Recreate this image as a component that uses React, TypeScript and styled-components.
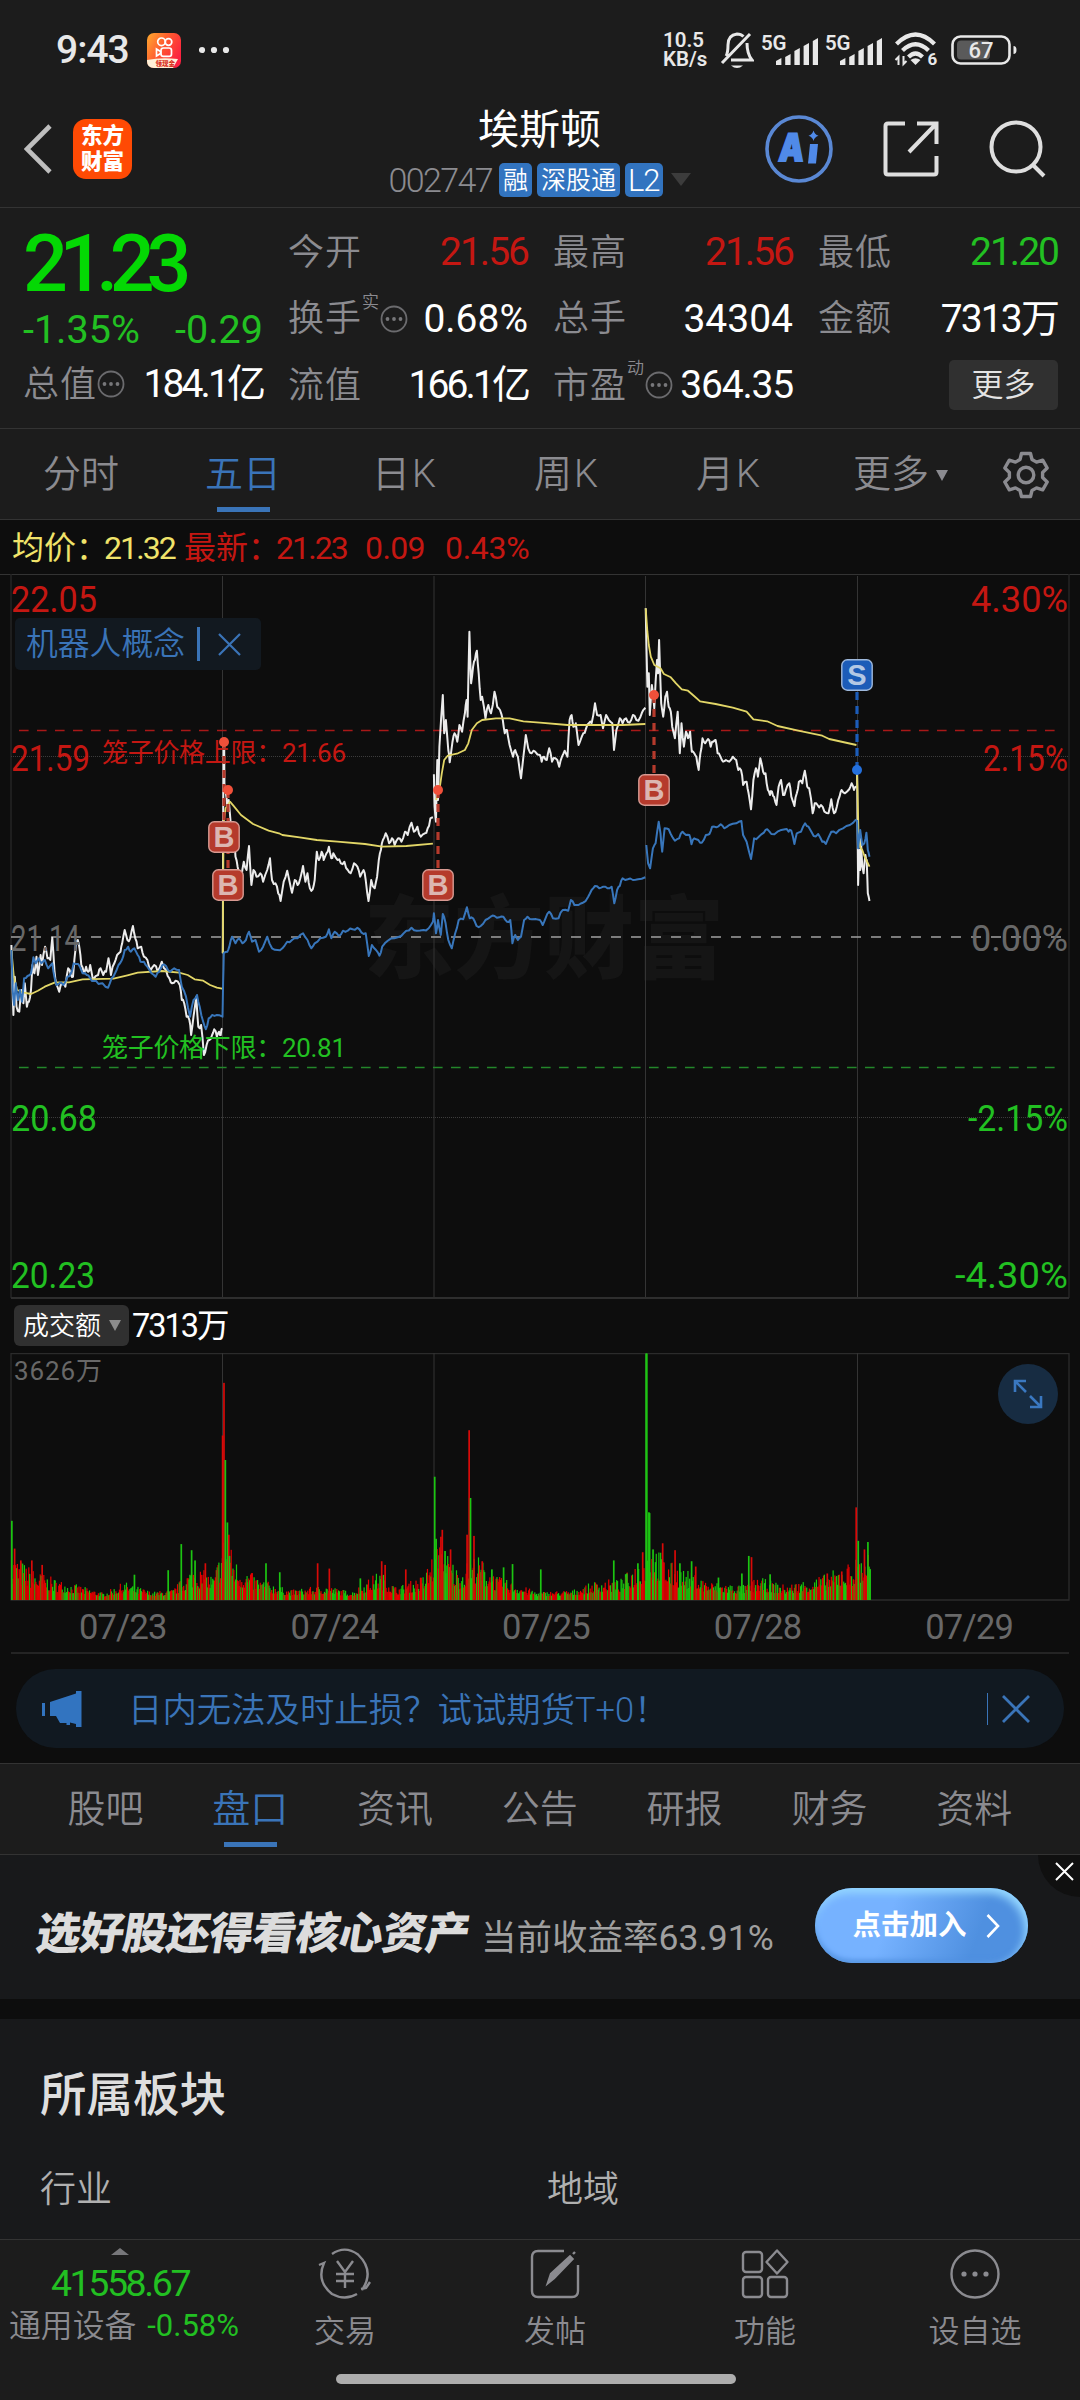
import React from "react";
import styled, { createGlobalStyle } from "styled-components";

const FONT = `Roboto, "Noto Sans CJK SC", sans-serif`;
const RED = "#c41712";
const GREEN = "#22c022";
const BLUE = "#3a74b8";
const GREY = "#8b8b90";

const GlobalStyle = createGlobalStyle`
  * { box-sizing: border-box; }
  body { margin: 0; background: #0d0d0d; font-family: ${FONT}; font-weight: 350; }
`;

const Screen = styled.main`
  width: 1080px;
  height: 2400px;
  overflow: hidden;
  display: flex;
  flex-direction: column;
  background: #0d0d0d;
  color: #fff;
  line-height: 1.2;
  white-space: nowrap;
`;

/* ---------- status bar ---------- */
const StatusBar = styled.header`
  height: 96px;
  padding: 4px 62px 0 56px;
  display: flex;
  align-items: center;
  justify-content: space-between;
  background: #1c1c1c;
  color: #e8e8e8;
`;
const StatusGroup = styled.div<{ $gap: number }>`
  display: flex;
  align-items: center;
  gap: ${(p) => p.$gap}px;
`;
const Clock = styled.span`
  font-size: 39px;
  font-weight: 500;
  letter-spacing: -1px;
  line-height: 44px;
`;
const NetSpeed = styled.span`
  width: 50px;
  display: flex;
  flex-direction: column;
  font-size: 20.5px;
  font-weight: 600;
  line-height: 19px;
`;
const Signal = styled.span`
  width: 57px;
  display: flex;
  align-items: flex-start;
  height: 32px;
`;
const SignalTag = styled.span`
  width: 27px;
  margin-right: -11px;
  padding-top: 1px;
  font-size: 20.5px;
  font-weight: 600;
  line-height: 17px;
  letter-spacing: -0.3px;
`;

/* ---------- title bar ---------- */
const TitleBar = styled.div`
  height: 112px;
  padding: 0 34px 6px 24px;
  display: flex;
  align-items: center;
  background: #1c1c1c;
  border-bottom: 1px solid #333;
`;
const Side = styled.div<{ $end?: boolean }>`
  width: 330px;
  display: flex;
  align-items: center;
  justify-content: ${(p) => (p.$end ? "flex-end" : "flex-start")};
  gap: ${(p) => (p.$end ? 50 : 20)}px;
`;
const Logo = styled.span`
  width: 59px;
  height: 60px;
  border-radius: 13px;
  background: #ff4a04;
  display: grid;
  place-content: center;
  font-size: 21.5px;
  font-weight: 800;
  line-height: 26px;
`;
const TitleStack = styled.div`
  flex: 1;
  padding: 4px 0 0 9px;
  display: flex;
  flex-direction: column;
  align-items: center;
  gap: 8px;
`;
const StockName = styled.h1`
  margin: 0;
  font-size: 41px;
  font-weight: 400;
  line-height: 50px;
`;
const CodeRow = styled.div`
  display: flex;
  align-items: center;
  gap: 5px;
  font-size: 34px;
  line-height: 34px;
  color: ${GREY};
`;
const Code = styled.span`
  letter-spacing: -1.6px;
  margin-right: 2px;
`;
const Badge = styled.span<{ $latin?: boolean }>`
  height: 34px;
  padding: 0 ${(p) => (p.$latin ? 3 : 4)}px;
  border-radius: 5px;
  background: #3274c0;
  color: #fff;
  font-size: ${(p) => (p.$latin ? 31 : 25)}px;
  font-weight: 350;
  line-height: 35px;
  letter-spacing: ${(p) => (p.$latin ? -1 : 0)}px;
`;
const Caret = styled.i<{ $w: number; $h: number; $color: string; $up?: boolean }>`
  width: 0;
  height: 0;
  border: ${(p) => p.$w / 2}px solid transparent;
  border-width: ${(p) => (p.$up ? `0 ${p.$w / 2}px ${p.$h}px` : `${p.$h}px ${p.$w / 2}px 0`)};
  border-top-color: ${(p) => (p.$up ? "transparent" : p.$color)};
  border-bottom-color: ${(p) => (p.$up ? p.$color : "transparent")};
`;

/* ---------- quote ---------- */
const Quote = styled.section`
  height: 221px;
  padding: 11px 22px 0 23px;
  display: flex;
  justify-content: space-between;
  background: #1c1c1c;
  border-bottom: 1px solid #333;
`;
const QuoteColumn = styled.div`
  width: 240px;
  display: flex;
  flex-direction: column;
`;
const Price = styled.div`
  height: 88px;
  font-size: 79px;
  font-weight: 500;
  line-height: 90px;
  letter-spacing: -8.3px;
  color: #04d804;
`;
const Changes = styled.div`
  height: 44px;
  display: flex;
  justify-content: space-between;
  font-size: 39.5px;
  font-weight: 400;
  line-height: 46px;
  color: ${GREEN};
`;
const Metric = styled.div`
  height: 66.5px;
  display: flex;
  align-items: center;
`;
const MetricLabel = styled.span`
  padding-top: 2px;
  font-size: 36px;
  letter-spacing: 1px;
  color: ${GREY};
`;
const Sup = styled.sup`
  align-self: flex-start;
  margin-top: 4px;
  width: 18px;
  font-size: 17px;
  line-height: 24px;
  color: ${GREY};
`;
const MetricValue = styled.span<{ $color?: string; $ls?: number }>`
  margin-left: auto;
  padding-top: 1px;
  font-size: 39px;
  font-weight: 380;
  letter-spacing: ${(p) => p.$ls ?? 0}px;
  color: ${(p) => p.$color ?? "#fff"};
`;
const MoreButton = styled.button`
  margin-left: auto;
  width: 109px;
  height: 50px;
  padding: 0;
  border: 0;
  border-radius: 5px;
  background: #303030;
  color: #e4e4e4;
  font: 350 32px/50px ${FONT};
`;

/* ---------- tabs ---------- */
const TabRow = styled.nav<{ $height: number; $pad: number }>`
  height: ${(p) => p.$height}px;
  padding: 0 ${(p) => p.$pad}px;
  display: flex;
  background: #1c1c1c;
  border-bottom: 1px solid #333;
`;
const Tab = styled.div<{ $w: number; $active?: boolean; $ls?: number }>`
  width: ${(p) => p.$w}px;
  padding-top: 2px;
  display: flex;
  align-items: center;
  justify-content: center;
  gap: 7px;
  font-size: 38px;
  letter-spacing: ${(p) => p.$ls ?? 0}px;
  color: ${(p) => (p.$active ? BLUE : GREY)};
  background: ${(p) =>
    p.$active ? `linear-gradient(${BLUE}, ${BLUE}) center bottom 7px / 53px 5px no-repeat` : "none"};
`;

/* ---------- chart ---------- */
const AverageLine = styled.div`
  height: 54px;
  padding: 2px 0 0 12px;
  display: flex;
  align-items: center;
  font-size: 32px;
`;
const Figure = styled.span<{ $color: string; $w: number; $ls?: number }>`
  width: ${(p) => p.$w}px;
  color: ${(p) => p.$color};
  font-weight: 380;
  letter-spacing: ${(p) => p.$ls ?? 0}px;
`;
const PriceChart = styled.section`
  position: relative;
  height: 725px;
`;
const ConceptTag = styled.div`
  position: absolute;
  left: 15px;
  top: 44px;
  width: 246px;
  height: 52px;
  padding-left: 11px;
  display: flex;
  align-items: center;
  border-radius: 5px;
  background: #121920;
  color: ${BLUE};
  font-size: 31.8px;
`;
const TagBar = styled.i`
  width: 3px;
  height: 34px;
  margin: 0 18px 0 12px;
  background: ${BLUE};
`;
const Svg = styled.svg`
  display: block;
  flex: none;
  font-family: ${FONT};
`;
const VolumeHead = styled.div`
  height: 54px;
  padding: 6px 14px 0;
  display: flex;
  align-items: flex-start;
  gap: 3px;
  font-size: 32.5px;
  line-height: 42px;
`;
const VolumeSelect = styled.span`
  width: 115px;
  height: 41px;
  padding-left: 9px;
  display: flex;
  align-items: center;
  gap: 8px;
  border-radius: 6px;
  background: #303030;
  font-size: 26px;
`;
const VolumeChart = styled.section`
  position: relative;
  height: 248px;
`;
const ExpandButton = styled.button`
  position: absolute;
  left: 998px;
  top: 11px;
  width: 60px;
  height: 60px;
  padding: 0;
  border: 0;
  border-radius: 50%;
  background: #172c42;
  display: grid;
  place-items: center;
`;
const Dates = styled.div`
  height: 53px;
  margin: 0 11px;
  padding-left: 6px;
  display: grid;
  grid-template-columns: repeat(5, 211.6px);
  text-align: center;
  font-size: 34.5px;
  font-weight: 400;
  line-height: 52px;
  letter-spacing: -0.8px;
  color: #686868;
  border-bottom: 2px solid #242424;
`;

/* ---------- notice ---------- */
const NoticeWrap = styled.div`
  height: 110px;
  padding: 15px 16px;
  border-bottom: 1px solid #333;
`;
const Notice = styled.div`
  height: 79px;
  padding: 0 34px 0 26px;
  display: flex;
  align-items: center;
  border-radius: 40px;
  background: #111921;
  color: ${BLUE};
  font-size: 34.4px;
`;
const NoticeText = styled.span`
  flex: 1;
  margin-left: 46px;
  padding-top: 5px;
`;
const Divider = styled.i`
  width: 1px;
  height: 32px;
  margin-right: 14px;
  background: ${BLUE};
`;

/* ---------- promotion ---------- */
const Promo = styled.section`
  position: relative;
  overflow: hidden;
  height: 144px;
  padding: 0 52px 0 38px;
  display: flex;
  align-items: center;
  background: #18191b;
`;
const PromoTitle = styled.strong`
  width: 443px;
  padding-top: 14px;
  font-size: 44px;
  font-weight: 900;
  letter-spacing: -0.8px;
  transform: skewX(-9deg);
  color: #dcdcdc;
`;
const PromoText = styled.span`
  flex: 1;
  padding-top: 23px;
  font-size: 35.5px;
  font-weight: 380;
  color: #a0a0a0;
`;
const PromoButton = styled.button`
  width: 213px;
  height: 75px;
  margin-top: -3px;
  padding: 0 0 0 9px;
  display: flex;
  align-items: center;
  justify-content: center;
  gap: 19px;
  border: 0;
  border-radius: 38px;
  background: linear-gradient(110deg, #76b2ff 35%, #4f90e0 75%);
  box-shadow: inset -3px 5px 8px #96d8ff, inset 0 -3px 5px #508fe0;
  color: #fff;
  font: 700 28.5px/79px ${FONT};
`;
const PromoClose = styled.span`
  position: absolute;
  right: -42px;
  top: -42px;
  width: 84px;
  height: 84px;
  padding: 49px 0 0 17px;
  border-radius: 50%;
  background: #101010;
`;

/* ---------- sector ---------- */
const Sector = styled.section`
  margin-top: 20px;
  height: 220px;
  padding: 46px 40px 0;
  background: #18191b;
`;
const SectorTitle = styled.h2`
  margin: 0;
  font-size: 46.5px;
  font-weight: 500;
  line-height: 60px;
  color: #dedede;
`;
const SectorColumns = styled.div`
  margin-top: 40px;
  display: grid;
  grid-template-columns: 507px 1fr;
  font-size: 36px;
  line-height: 50px;
  color: #b0b0b0;
`;

/* ---------- bottom bar ---------- */
const BottomBar = styled.footer`
  height: 161px;
  display: grid;
  grid-template: 115px 1fr / 240px repeat(4, 210px);
  background: #1c1c1c;
  border-top: 1px solid #333;
`;
const IndexCell = styled.div`
  display: flex;
  flex-direction: column;
  align-items: center;
  padding-top: 8px;
  color: ${GREEN};
`;
const IndexValue = styled.span`
  margin-top: 6px;
  font-size: 37.5px;
  font-weight: 400;
  line-height: 44px;
  letter-spacing: -2.4px;
`;
const IndexName = styled.span`
  margin: 2px 0 0 8px;
  display: flex;
  gap: 11px;
  font-size: 31.8px;
  line-height: 38px;
  color: ${GREY};
`;
const IndexChange = styled.em`
  font-style: normal;
  font-size: 31px;
  font-weight: 400;
  color: ${GREEN};
`;
const NavItem = styled.div`
  display: flex;
  flex-direction: column;
  align-items: center;
  padding-top: 8px;
  gap: 13px;
  font-size: 31px;
  line-height: 38px;
  color: ${GREY};
`;
const HomeBar = styled.i`
  grid-column: 1 / -1;
  justify-self: center;
  align-self: start;
  width: 400px;
  height: 10px;
  margin: 19px 8px 0 0;
  border-radius: 5px;
  background: #adadad;
`;

/* ---------- small icons ---------- */
const Cross = ({ size, color, width }: { size: number; color: string; width: number }) => (
  <Svg width={size} height={size} viewBox={`0 0 ${size} ${size}`}>
    <path d={`M1 1L${size - 1} ${size - 1}M${size - 1} 1L1 ${size - 1}`} stroke={color} strokeWidth={width} />
  </Svg>
);
const InfoDots = () => (
  <Svg width="28" height="28" viewBox="0 0 28 28">
    <circle cx="14" cy="14" r="12.5" fill="none" stroke="#6b6b6e" strokeWidth="1.8" />
    {[7.5, 14, 20.5].map((x) => (
      <circle key={x} cx={x} cy="14" r="1.9" fill="#77777a" />
    ))}
  </Svg>
);
const SignalBars = () => (
  <Svg width="42" height="32" viewBox="0 0 42 32">
    {[7, 11, 17, 22, 27].map((h, i) => (
      <path key={h} d={`M${i * 9.2} 31V${34 - h}l5.4-3V31z`} fill="#e8e8e8" />
    ))}
  </Svg>
);

/* ---------- chart data ---------- */
type Series = number[][];
const KX = 2.904;
const points = (flat: number[], shift = 0): Series => {
  const out: Series = [];
  for (let i = 0; i < flat.length; i += 2) out.push([(flat[i] + shift) / KX, flat[i + 1] / 3 - 14]);
  return out;
};
let seed = 7;
const rand = () => {
  seed = (seed * 16807) % 2147483647;
  return seed / 2147483647;
};
const path = (pts: Series, noise = 0) => {
  let d = `M${pts[0][0].toFixed(1)} ${pts[0][1].toFixed(1)}`;
  for (let i = 1; i < pts.length; i++) {
    const [x0, y0] = pts[i - 1];
    const [x1, y1] = pts[i];
    if (noise) {
      d += `L${((x0 + x1) / 2).toFixed(1)} ${((y0 + y1) / 2 + (rand() - 0.5) * noise).toFixed(1)}`;
    }
    d += `L${x1.toFixed(1)} ${y1.toFixed(1)}`;
  }
  return d;
};

const price: Series[] = [
  points([33,1155,36,1270,39,1365,43,1250,48,1340,56,1355,62,1290,68,1330,72,1270,78,1340,84,1325,90,1290,94,1215,100,1240,106,1190,110,1245,118,1185,122,1215,131,1160,138,1195,146,1200,152,1133,158,1230,163,1270,172,1295,180,1270,190,1280,198,1225,206,1245,212,1250,220,1160,226,1140,231,1165,236,1215,244,1240,250,1220,256,1235,262,1215,270,1260,285,1245,292,1225,300,1245,308,1235,315,1195,322,1245,332,1210,340,1185,350,1175,355,1150,362,1110,370,1140,378,1135,386,1098,393,1135,400,1165,410,1160,418,1190,428,1200,438,1230,448,1215,458,1235,470,1205,482,1230,492,1255,500,1270,510,1262,522,1275,528,1320,535,1330,542,1370,550,1380,555,1425,562,1370,570,1310,576,1400,584,1395,592,1485,600,1455,608,1440,616,1425,622,1408,630,1430,636,1415,641,1425,645,1405]),
  points([647,1180,649,545,651,545,652,690,656,700,660,740,664,720,670,790,676,870,680,810,684,890,690,920,694,950,700,960,708,905,716,930,723,858,730,975,736,930,745,950,756,940,764,965,776,930,784,895,790,960,800,970,808,1000,815,1023,824,965,834,932,842,970,848,998,856,960,864,975,872,955,880,918,887,965,893,940,900,985,908,988,914,960,920,875,926,900,934,875,940,900,948,880,955,860,962,895,968,880,980,900,990,910,1000,905,1010,930,1018,940,1028,910,1038,920,1046,950,1056,930,1062,960,1070,1023,1078,960,1088,985,1095,950,1100,900,1106,870,1112,840,1120,820,1130,850,1138,835,1146,855,1156,835,1166,845,1176,815,1184,825,1195,788,1202,815,1212,800,1222,830,1234,820,1242,805,1250,775,1257,772]),
  points([1260,643,1262,740,1266,785,1270,600,1272,720,1276,560,1286,405,1290,520,1295,480,1302,570,1306,607,1314,545,1320,520,1328,545,1334,495,1342,515,1350,460,1355,420,1358,470,1363,215,1368,370,1374,320,1379,300,1385,272,1390,340,1396,420,1400,410,1410,475,1418,435,1426,460,1436,395,1444,440,1452,450,1460,480,1466,520,1472,510,1480,555,1490,590,1496,570,1504,590,1513,655,1520,590,1527,525,1534,565,1544,580,1554,575,1568,585,1573,605,1580,590,1588,600,1595,565,1603,605,1613,595,1624,620,1632,590,1640,572,1648,590,1654,480,1660,465,1665,500,1672,490,1680,555,1686,540,1694,520,1702,505,1710,490,1718,490,1728,430,1734,465,1744,465,1751,505,1760,465,1768,480,1778,490,1783,570,1790,510,1800,475,1808,490,1818,475,1828,488,1838,465,1848,480,1860,470,1868,450,1874,443]),
  points([307,145,312,380,316,340,319,465,325,375,332,445,340,300,343,340,346,240,352,430,358,470,364,410,369,395,374,440,380,455,384,500,392,535,400,455,406,580,411,490,418,560,424,515,430,535,436,515,441,575,448,580,454,590,461,630,466,580,472,535,480,550,488,537,496,560,504,545,510,540,516,580,524,590,532,605,540,600,550,605,560,590,570,600,576,630,584,630,590,675,600,665,606,700,613,748,620,660,627,625,633,650,640,595,648,635,655,640,662,690,668,705,674,695,680,710,687,735,693,680,700,660,706,705,714,690,724,670,730,710,739,738,746,700,752,665,762,670,769,632,776,680,782,685,792,760,798,730,806,735,816,735,826,755,838,760,846,718,854,760,862,740,870,710,876,690,886,700,898,688,905,670,912,690,919,680], 1568),
  points([921,640,922,760,924,975,927,870,930,930,932,835,936,920,940,940,945,885,949,900,952,1000,957,1023], 1568),
];
const average: Series[] = [
  points([33,1170,40,1250,50,1290,70,1298,90,1302,110,1292,130,1280,160,1267,200,1267,240,1258,330,1256,370,1246,400,1238,470,1233,520,1238,545,1245,565,1258,590,1262,610,1275,630,1283,645,1286]),
  points([647,1180,649,790,655,745,668,725,680,740,700,765,735,792,780,812,810,820,820,825,870,832,920,840,980,845,1060,852,1110,860,1180,858,1257,851]),
  points([1266,720,1276,690,1283,640,1290,600,1300,587,1330,580,1350,570,1360,550,1370,510,1385,490,1400,480,1440,475,1480,475,1520,484,1568,488,1648,495,1718,495,1808,495,1874,492]),
  points([307,145,312,215,316,255,322,290,332,315,350,325,360,342,380,352,395,370,412,388,430,392,450,410,465,424,510,432,560,443,600,455,620,478,660,484,690,498,750,512,820,527,840,537,919,555], 1568),
  points([921,640,925,820,930,862,936,870,943,890,957,920], 1568),
];
const sector: Series[] = [
  points([33,1170,37,1290,41,1335,46,1270,52,1320,58,1290,64,1325,70,1255,80,1248,90,1240,97,1192,104,1210,112,1195,120,1210,130,1200,140,1225,152,1210,158,1250,164,1275,174,1268,184,1275,196,1250,206,1240,214,1210,222,1212,232,1220,240,1240,252,1245,262,1255,272,1262,286,1272,298,1270,314,1283,324,1255,334,1240,344,1215,354,1200,362,1170,372,1160,380,1175,390,1165,400,1185,408,1205,418,1205,428,1220,440,1240,452,1250,462,1235,472,1215,482,1218,494,1235,506,1225,520,1230,528,1280,540,1310,552,1370,562,1320,572,1305,580,1340,590,1385,598,1408,606,1375,616,1365,630,1365,646,1370,648,1270,650,1180,660,1175,666,1160,674,1130,684,1150,694,1135,704,1150,714,1140,723,1115,732,1145,742,1140,752,1175,764,1160,776,1130,790,1165,806,1170,820,1165,834,1145,848,1140,864,1135,880,1120,893,1140,904,1165,914,1150,930,1135,946,1130,955,1108,962,1135,972,1115,984,1128,996,1112,1010,1112,1024,1108,1038,1103,1050,1118,1062,1120,1071,1188,1080,1155,1092,1170,1102,1187,1110,1160,1125,1143,1145,1135,1165,1128,1180,1112,1195,1103,1210,1112,1230,1110,1245,1105,1257,1085,1260,1060,1266,1120,1272,1080,1280,1125,1286,1062,1294,1090,1302,1140,1312,1165,1322,1120,1332,1080,1345,1078,1356,1042,1364,1075,1374,1075,1384,1098,1396,1098,1410,1080,1425,1070,1436,1068,1450,1072,1462,1070,1472,1085,1482,1080,1488,1150,1496,1125,1504,1140,1513,1130,1522,1080,1532,1070,1545,1078,1568,1080,1576,1095,1584,1075,1595,1055,1606,1075,1622,1075,1634,1050,1650,1052,1658,1020,1668,1035,1680,1035,1693,1028,1708,1010,1718,990,1728,978,1740,985,1752,980,1764,985,1776,980,1784,1030,1792,990,1800,978,1808,955,1823,958,1838,960,1853,958,1874,952]),
  points([309,855,314,910,320,925,328,865,336,850,345,785,350,820,355,875,362,805,374,808,384,830,392,842,404,835,414,815,424,825,434,825,440,853,448,835,460,840,470,848,482,825,492,822,500,800,512,802,525,793,535,805,550,795,570,790,585,783,590,825,600,845,613,897,622,835,634,832,650,818,660,808,672,822,690,815,712,808,722,815,730,812,739,852,746,820,758,815,770,790,780,800,795,828,808,822,820,845,830,852,846,815,860,820,880,805,900,795,918,778], 1568),
  points([921,780,924,865,930,810,936,855,942,850,948,818,952,870,957,890], 1568),
];

/* turnover bars: rough level along the axis, plus the outstanding bars */
const level = [16,80,50,50,80,35,110,25,150,10,180,30,220,12,250,16,280,60,310,40,325,120,345,60,380,34,420,15,470,24,510,12,550,50,575,20,615,42,632,100,650,80,665,50,690,80,720,40,780,12,830,15,870,34,900,34,935,80,950,100,965,70,1000,48,1030,30,1080,24,1100,38,1140,24,1200,44,1240,70,1264,90];
const spikes = "17,1226,g 21,1294,r 30,1323,r 46,1323,r 61,1334,r 195,1358,g 244,1347,g 263,1283,g 278,1298,g 283,1323,g 298,1330,r 323,1017,r 325,888,r 327,1077,g 330,1230,g 332,1260,r 333,1312,g 386,1330,g 406,1352,g 461,1330,r 478,1343,r 523,1367,g 554,1325,r 559,1334,r 589,1345,r 631,1118,g 633,1270,g 640,1265,r 642,1248,r 646,1300,g 654,1296,r 678,1260,r 681,1004,r 683,1170,g 688,1263,r 700,1325,r 714,1345,g 731,1340,g 744,1332,g 785,1345,g 891,1323,g 910,1355,g 926,1330,g 933,1303,r 938,816,g 939,816,g 942,1205,g 943,1207,g 948,1296,g 962,1281,r 980,1298,r 987,1330,g 1004,1325,g 1010,1338,r 1043,1365,g 1077,1355,g 1087,1312,g 1091,1315,r 1118,1357,g 1201,1355,r 1222,1350,r 1243,1193,r 1246,1275,g 1255,1296,r 1260,1278,g 1263,1345,g"
  .split(" ")
  .map((s) => s.split(","));
const bars: { x: number; h: number; c: string; w: number }[] = [];
for (let x = 11.5; x < 870; x += 0.88) {
  const u = x * 1.452;
  let i = 0;
  while (i < level.length - 4 && level[i + 2] < u) i += 2;
  const t = Math.min(1, Math.max(0, (u - level[i]) / (level[i + 2] - level[i])));
  const base = level[i + 1] + (level[i + 3] - level[i + 1]) * t;
  bars.push({ x, h: (base * (0.45 + 0.95 * Math.pow(rand(), 1.4))) / 2.45 + 1.5, c: rand() < 0.58 ? "#e40000" : "#18c80e", w: 1.2 });
}
spikes.forEach(([x, y, c]) =>
  bars.push({ x: +x / 1.452 - 0.7, h: (1420 - +y) / 2.45, c: c === "r" ? "#d80a08" : "#1cc512", w: 1.7 })
);

const gridX = [222.5, 434, 645.5, 857.5];
const axis: [string, number, number, string, boolean][] = [
  ["22.05", 38, 86, RED, false],
  ["21.59", 197, 79, RED, false],
  ["21.14", 377, 69, "#686868", false],
  ["20.68", 557, 86, GREEN, false],
  ["20.23", 714, 84, GREEN, false],
  ["4.30%", 38, 97, RED, true],
  ["2.15%", 197, 85, RED, true],
  ["0.00%", 377, 97, "#686868", true],
  ["-2.15%", 557, 100, GREEN, true],
  ["-4.30%", 714, 113, GREEN, true],
];
const trades = [
  { x: 224, y: 263, dot: [224, 168] },
  { x: 228, y: 311, dot: [228, 216] },
  { x: 438, y: 311, dot: [438, 216] },
  { x: 654, y: 216, dot: [654, 121] },
  { x: 857, y: 101, dot: [857, 196], sell: true },
];

const PricePlot = () => (
  <Svg width="1080" height="725" viewBox="0 0 1080 725">
    <path d="M0 .5H1080" stroke="#333" />
    <text x="364" y="397" fontSize="90" fontWeight="900" fill="#151515" textLength="360" style={{ fontFamily: "Noto Sans CJK SC" }}>
      东方财富
    </text>
    <path d="M11 0V724M1069 0V724" stroke="#232323" strokeWidth="1.6" />
    {gridX.map((x) => (
      <path key={x} d={`M${x} 2V724`} stroke="#343434" />
    ))}
    <path d="M11 182.5H1069M11 543.5H1069" stroke="#3c3c3c" strokeDasharray="1 1" />
    <path d="M11 724H1069" stroke="#2e2e2e" strokeWidth="2" />
    <path d="M11 363H1069" stroke="#a0a0a0" strokeWidth="1.6" strokeDasharray="10 10" />
    <path d="M19 156.5H1056" stroke="#a81818" strokeWidth="1.4" strokeDasharray="9.6 8.4" />
    <path d="M19 493.5H1056" stroke="#23862a" strokeWidth="1.6" strokeDasharray="9.6 8.4" />
    <g fill="none" strokeWidth="2" strokeLinejoin="round">
      {price.map((s, i) => <path key={i} d={path(s, 5)} stroke="#ececec" />)}
      {average.map((s, i) => <path key={i} d={path(s)} stroke="#e2d667" strokeWidth="1.8" />)}
      {sector.map((s, i) => <path key={i} d={path(s, 3)} stroke="#3876bb" />)}
    </g>
    {axis.map(([label, y, w, color, right]) => (
      <text key={label} x={right ? 1068 - w : 11} y={y} fontSize="36" fontWeight="400" fill={color} textLength={w} lengthAdjust="spacingAndGlyphs">
        {label}
      </text>
    ))}
    <text x="102" y="187.5" fontSize="26" fill={RED} fontWeight="380" textLength="244">笼子价格上限：21.66</text>
    <text x="102" y="482.5" fontSize="26" fill={GREEN} fontWeight="380" textLength="244">笼子价格下限：20.81</text>
    {trades.map(({ x, y, dot, sell }) => (
      <g key={x}>
        <path d={`M${dot[0]} ${dot[1]}V${sell ? y + 17 : y - 17}`} stroke={sell ? "#1c5cb8" : "#b53a2c"} strokeWidth="3.2" strokeDasharray="8 6" />
        <circle cx={dot[0]} cy={dot[1]} r="5" fill={sell ? "#2470dd" : "#f0503a"} />
      </g>
    ))}
    {trades.map(({ x, y, sell }) => (
      <g key={x}>
        <rect x={x - 15.2} y={y - 15.2} width="30.4" height="30.4" rx="5.5" fill={sell ? "#1c5cb8" : "#b53a2c"} stroke={sell ? "#9fb9dc" : "#d89a92"} strokeWidth="1.4" />
        <text x={x} y={y + 10} fontSize="29" fontWeight="600" textAnchor="middle" fill={sell ? "#b4c8e4" : "#dcb6b1"} style={{ fontFamily: "Liberation Sans" }}>
          {sell ? "S" : "B"}
        </text>
      </g>
    ))}
  </Svg>
);

const VolumePlot = () => (
  <Svg width="1080" height="248" viewBox="0 0 1080 248">
    <path d="M11 .5H1069V247H11z" fill="none" stroke="#2b2b2b" strokeWidth="1.3" />
    {gridX.map((x) => (
      <path key={x} d={`M${x} 0V247`} stroke="#343434" />
    ))}
    {bars.map((b, i) => (
      <rect key={i} x={b.x} y={247 - b.h} width={b.w} height={b.h} fill={b.c} />
    ))}
    <text x="14" y="27" fontSize="26" fontWeight="380" fill="#686868" textLength="88">3626万</text>
  </Svg>
);

const Item = ({ label, value, color, ls, sup, info }: { label: string; value: string; color?: string; ls?: number; sup?: string; info?: boolean }) => (
  <Metric>
    <MetricLabel>{label}</MetricLabel>
    {sup && <Sup>{sup}</Sup>}
    {info && <InfoDots />}
    <MetricValue $color={color} $ls={ls}>{value}</MetricValue>
  </Metric>
);

const navStroke = { fill: "none", stroke: GREY, strokeWidth: 2.4 };

export default function App() {
  return (
    <Screen>
      <GlobalStyle />
      <StatusBar>
        <StatusGroup $gap={18}>
          <Clock>9:43</Clock>
          <Svg width="34" height="35" viewBox="0 0 34 35">
            <defs>
              <linearGradient id="ks" x1="0" y1="0" x2="1" y2="0.6">
                <stop offset="0" stopColor="#ffab2e" />
                <stop offset=".55" stopColor="#ff5430" />
                <stop offset="1" stopColor="#fb2140" />
              </linearGradient>
            </defs>
            <rect width="34" height="35" rx="7" fill="url(#ks)" />
            <path d="M0 27Q14 24 31 26L26 35H7Q0 35 0 28z" fill="#fff0d8" />
            <g fill="none" stroke="#fff" strokeWidth="1.7">
              <circle cx="14.5" cy="8.8" r="3.8" />
              <circle cx="21.5" cy="9" r="3.3" />
              <rect x="14" y="15" width="10.5" height="8.3" rx="2.4" />
              <path d="M13.5 18.5L9.5 16v7l4-2.5z" />
            </g>
            <text x="8.5" y="33" fontSize="6.5" fontWeight="900" fill="#d8321e">领现金</text>
          </Svg>
          <Svg width="32" height="8" viewBox="0 0 32 8">
            {[3, 15, 27].map((x) => <circle key={x} cx={x} cy="4" r="3.1" fill="#e8e8e8" />)}
          </Svg>
        </StatusGroup>
        <StatusGroup $gap={7}>
          <NetSpeed><span>10.5</span><span>KB/s</span></NetSpeed>
          <Svg width="34" height="38" viewBox="0 0 34 38" fill="none" stroke="#e8e8e8" strokeWidth="3">
            <path d="M6 25Q8 22 8 14Q8 4 17 3Q21 3 23.5 5.5M27 12Q27 23 32 29H11M2 32L30 3" />
            <path d="M11 34.5H23Q17 39.5 11 34.5z" fill="#e8e8e8" stroke="none" />
          </Svg>
          <Signal><SignalTag>5G</SignalTag><SignalBars /></Signal>
          <Signal><SignalTag>5G</SignalTag><SignalBars /></Signal>
          <Svg width="55" height="40" viewBox="-4.5 -1 55 40" fill="none" stroke="#e8e8e8" strokeWidth="4.2">
            <path d="M3 13Q22 -6 41 13M9 19.5Q22 7 35 19.5M15 26Q22 19 29 26" />
            <path d="M17 29Q22 25.5 27 29L22 34z" fill="#e8e8e8" stroke="none" />
            <path d="M5 34V26L2 29M10 25v8l3-3" strokeWidth="2" />
            <text x="34" y="34" fontSize="17" fontWeight="700" fill="#e8e8e8" stroke="none">6</text>
          </Svg>
          <Svg width="67" height="30" viewBox="0 0 67 30">
            <rect x="1.5" y="1.5" width="57" height="27" rx="8" fill="none" stroke="#e8e8e8" strokeWidth="2.6" />
            <rect x="6" y="5.5" width="33" height="19" rx="4" fill="#5a5a5a" />
            <path d="M62.5 11q3 0 3 4t-3 4z" fill="#e8e8e8" />
            <text x="30" y="22.5" fontSize="22" fontWeight="500" textAnchor="middle" fill="#e8e8e8">67</text>
          </Svg>
        </StatusGroup>
      </StatusBar>

      <TitleBar>
        <Side>
          <Svg width="29" height="50" viewBox="0 0 29 50">
            <path d="M26 2L3 25L26 48" fill="none" stroke="#bebebe" strokeWidth="4.6" />
          </Svg>
          <Logo><span>东方</span><span>财富</span></Logo>
        </Side>
        <TitleStack>
          <StockName>埃斯顿</StockName>
          <CodeRow>
            <Code>002747</Code>
            <Badge>融</Badge>
            <Badge>深股通</Badge>
            <Badge $latin>L2</Badge>
            <Caret $w={20} $h={13} $color="#3c3c3c" style={{ marginLeft: 3 }} />
          </CodeRow>
        </TitleStack>
        <Side $end>
          <Svg width="68" height="68" viewBox="0 0 68 68">
            <circle cx="34" cy="34" r="32" fill="none" stroke="#5a88d4" strokeWidth="3.6" />
            <text x="15" y="46" fontSize="38" fontWeight="900" fill="#508ae8" stroke="#508ae8" strokeWidth="1.8" textLength="25" lengthAdjust="spacingAndGlyphs" transform="translate(2 0) skewX(-5)" style={{ fontFamily: "Inter" }}>A</text>
            <path d="M45 29h8l-2 19.5h-8z" fill="#508ae8" />
            <path d="M48.5 15.5q1 4 5 5.2q-4 1.2-5 5.2q-1-4-5-5.2q4-1.2 5-5.2z" fill="#508ae8" />
          </Svg>
          <Svg width="56" height="56" viewBox="0 0 56 56" fill="none" stroke="#dedede" strokeWidth="4">
            <path d="M22 2.5H5Q2.5 2.5 2.5 5V51Q2.5 53.5 5 53.5H51Q53.5 53.5 53.5 51V35M34 2.5H53.5V23M53 3L26 31" />
          </Svg>
          <Svg width="57" height="58" viewBox="0 0 57 58" fill="none" stroke="#dedede" strokeWidth="4">
            <circle cx="27" cy="27" r="24.5" />
            <path d="M43.5 44.5L55 56" />
          </Svg>
        </Side>
      </TitleBar>

      <Quote>
        <QuoteColumn>
          <Price>21.23</Price>
          <Changes><span>-1.35%</span><span>-0.29</span></Changes>
          <Item label="总值" value="184.1亿" info ls={-2.9} />
        </QuoteColumn>
        <QuoteColumn>
          <Item label="今开" value="21.56" color={RED} ls={-2} />
          <Item label="换手" value="0.68%" sup="实" info />
          <Item label="流值" value="166.1亿" ls={-2.9} />
        </QuoteColumn>
        <QuoteColumn>
          <Item label="最高" value="21.56" color={RED} ls={-2} />
          <Item label="总手" value="34304" />
          <Item label="市盈" value="364.35" sup="动" info ls={-1.2} />
        </QuoteColumn>
        <QuoteColumn>
          <Item label="最低" value="21.20" color={GREEN} ls={-2} />
          <Item label="金额" value="7313万" ls={-1.9} />
          <Metric><MoreButton>更多</MoreButton></Metric>
        </QuoteColumn>
      </Quote>

      <TabRow $height={91} $pad={0}>
        <Tab $w={162}>分时</Tab>
        <Tab $w={162} $active>五日</Tab>
        <Tab $w={162} $ls={2}>日K</Tab>
        <Tab $w={162} $ls={2}>周K</Tab>
        <Tab $w={162} $ls={2}>月K</Tab>
        <Tab $w={181}>更多<Caret $w={13} $h={11} $color={GREY} /></Tab>
        <Tab $w={70}>
          <Svg width="48" height="48" viewBox="0 0 48 48" fill="none" stroke={GREY} strokeWidth="3.4" strokeLinejoin="round">
            <path d="M19.5 2.5h9l1.5 6 4.5 2.6 6.2-1.9 4.5 7.8-4.6 4.4v5.2l4.6 4.4-4.5 7.8-6.2-1.9-4.5 2.6-1.5 6h-9l-1.5-6-4.5-2.6-6.2 1.9-4.5-7.8 4.6-4.4v-5.2L2.8 17l4.5-7.8 6.2 1.9L18 8.5z" />
            <circle cx="24" cy="24" r="7.8" />
          </Svg>
        </Tab>
      </TabRow>

      <AverageLine>
        <Figure $color="#f0e36a" $w={92}>均价：</Figure>
        <Figure $color="#f0e36a" $w={80} $ls={-1.9}>21.32</Figure>
        <Figure $color={RED} $w={92}>最新：</Figure>
        <Figure $color={RED} $w={89} $ls={-1.9}>21.23</Figure>
        <Figure $color={RED} $w={80} $ls={-0.6}>0.09</Figure>
        <Figure $color={RED} $w={100} $ls={-0.3}>0.43%</Figure>
      </AverageLine>

      <PriceChart>
        <PricePlot />
        <ConceptTag>
          机器人概念
          <TagBar />
          <Cross size={23} color={BLUE} width={2.2} />
        </ConceptTag>
      </PriceChart>

      <VolumeHead>
        <VolumeSelect>成交额<Caret $w={13} $h={11} $color="#8c8c8c" /></VolumeSelect>
        <Figure $color="#fff" $w={110} $ls={-2}>7313万</Figure>
      </VolumeHead>
      <VolumeChart>
        <VolumePlot />
        <ExpandButton>
          <Svg width="32" height="32" viewBox="0 0 32 32" fill="none" stroke="#3a78c0" strokeWidth="2.6">
            <path d="M14 3H3V14M3 3L14 14M18 29H29V18M29 29L18 18" />
          </Svg>
        </ExpandButton>
      </VolumeChart>
      <Dates>
        {["07/23", "07/24", "07/25", "07/28", "07/29"].map((d) => <span key={d}>{d}</span>)}
      </Dates>

      <NoticeWrap>
        <Notice>
          <Svg width="40" height="36" viewBox="0 0 40 36" fill="#3274c0">
            <path d="M0 12h3v13H0zM8 11L34 2.5V0h5.5v36H34v-3l-6-1.5v2.5h-3.5v-2H18l-4-7H8z" />
          </Svg>
          <NoticeText>日内无法及时止损？试试期货T+0！</NoticeText>
          <Divider />
          <Cross size={28} color={BLUE} width={2.8} />
        </Notice>
      </NoticeWrap>

      <TabRow $height={91} $pad={33}>
        {["股吧", "盘口", "资讯", "公告", "研报", "财务", "资料"].map((t) => (
          <Tab key={t} $w={144.8} $active={t === "盘口"}>{t}</Tab>
        ))}
      </TabRow>

      <Promo>
        <PromoTitle>选好股还得看核心资产</PromoTitle>
        <PromoText>当前收益率63.91%</PromoText>
        <PromoButton>
          点击加入
          <Svg width="14" height="24" viewBox="0 0 14 24">
            <path d="M1.5 1L12 12L1.5 23" fill="none" stroke="#fff" strokeWidth="2.6" />
          </Svg>
        </PromoButton>
        <PromoClose><Cross size={19} color="#fff" width={2} /></PromoClose>
      </Promo>

      <Sector>
        <SectorTitle>所属板块</SectorTitle>
        <SectorColumns><span>行业</span><span>地域</span></SectorColumns>
      </Sector>

      <BottomBar>
        <IndexCell>
          <Caret $w={19} $h={7} $color="#77777a" $up />
          <IndexValue>41558.67</IndexValue>
          <IndexName>通用设备<IndexChange>-0.58%</IndexChange></IndexName>
        </IndexCell>
        <NavItem>
          <Svg width="60" height="52" viewBox="0 0 60 52" {...navStroke}>
            <path d="M17 6Q30-3 43 6.5Q60 23 47 42M42 46Q30 53 17 46Q1 33 9 15L4 17M55 34l-4 6-5 1" />
            <path d="M22 13l8 11 8-11M30 24v16M21 26h18M21 33h18" />
          </Svg>
          交易
        </NavItem>
        <NavItem>
          <Svg width="52" height="52" viewBox="0 0 52 52" {...navStroke}>
            <path d="M35 3H9Q3 3 3 9V43Q3 49 9 49H43Q49 49 49 43V17" />
            <path d="M19 35L22 26L41 8.5L43.5 11L25 30zM44 6l2-2" fill={GREY} />
          </Svg>
          发帖
        </NavItem>
        <NavItem>
          <Svg width="52" height="52" viewBox="0 0 52 52" {...navStroke}>
            <rect x="4" y="4" width="19" height="20" rx="3" />
            <rect x="4" y="29" width="19" height="20" rx="3" />
            <rect x="29" y="29" width="19" height="20" rx="3" />
            <path d="M38 2.5L48.5 14L38 25.5L27.5 14z" strokeLinejoin="round" />
          </Svg>
          功能
        </NavItem>
        <NavItem>
          <Svg width="52" height="52" viewBox="0 0 52 52" {...navStroke}>
            <circle cx="26" cy="26" r="23.5" />
            {[15, 26, 37].map((x) => <circle key={x} cx={x} cy="26" r="2.6" fill={GREY} stroke="none" />)}
          </Svg>
          设自选
        </NavItem>
        <HomeBar />
      </BottomBar>
    </Screen>
  );
}
